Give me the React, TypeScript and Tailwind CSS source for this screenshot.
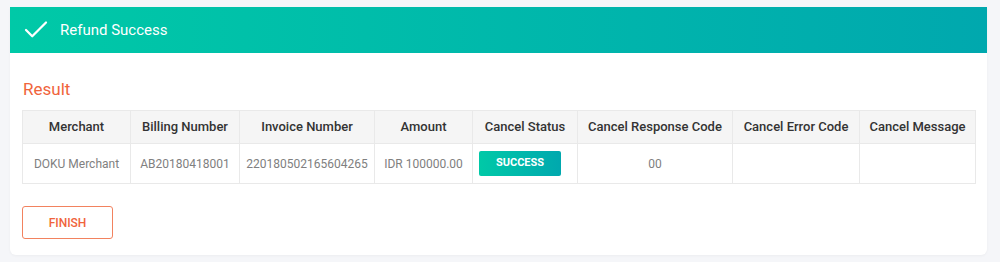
import { Check } from 'lucide-react';

const columns = [
  { label: 'Merchant', width: 'w-[108px]' },
  { label: 'Billing Number', width: 'w-[109px]' },
  { label: 'Invoice Number', width: 'w-[135px]' },
  { label: 'Amount', width: 'w-[98px]' },
  { label: 'Cancel Status', width: 'w-[105px]' },
  { label: 'Cancel Response Code', width: 'w-[155px]' },
  { label: 'Cancel Error Code', width: 'w-[127px]' },
  { label: 'Cancel Message', width: 'w-[116px]' },
];

export default function App() {
  return (
    <div className="min-h-[262px] bg-[#f5f6f9] pt-[7px] pl-[10px] font-['Roboto',sans-serif]">
      <div className="w-[977px] overflow-hidden rounded-b-[6px] bg-white shadow-[0_1px_3px_rgba(0,0,0,0.04)]">
        <div className="flex h-[46px] items-center gap-[9px] bg-linear-to-r from-[#00c9a7] to-[#00a8ae] pl-[11px] text-white">
          <Check className="h-[30px] w-[30px]" strokeWidth={1.8} />
          <span className="text-[15px]">Refund Success</span>
        </div>

        <div className="px-[12px] pt-[24px] pb-[16px]">
          <h2 className="mb-[9px] pl-px text-[17px] leading-[24px] text-[#f0643c]">Result</h2>

          <table className="w-[953px] table-fixed border-collapse text-center">
            <thead>
              <tr className="h-[33px] bg-[#f5f5f5]">
                {columns.map((col) => (
                  <th
                    key={col.label}
                    className={`${col.width} border border-[#e9e9e9] px-1 text-[13px] font-medium text-[#333]`}
                  >
                    {col.label}
                  </th>
                ))}
              </tr>
            </thead>
            <tbody>
              <tr className="h-[40px] text-[12px] text-[#808080]">
                <td className="border border-[#e9e9e9]">DOKU Merchant</td>
                <td className="border border-[#e9e9e9]">AB20180418001</td>
                <td className="border border-[#e9e9e9]">220180502165604265</td>
                <td className="border border-[#e9e9e9]">IDR 100000.00</td>
                <td className="border border-[#e9e9e9] pl-[6px]">
                  <span className="flex h-[25px] w-[82px] items-center justify-center rounded-[2px] bg-linear-to-r from-[#00c9a7] to-[#00a8ae] text-[11px] font-bold text-white">
                    SUCCESS
                  </span>
                </td>
                <td className="border border-[#e9e9e9]">00</td>
                <td className="border border-[#e9e9e9]"></td>
                <td className="border border-[#e9e9e9]"></td>
              </tr>
            </tbody>
          </table>

          <button
            type="button"
            className="mt-[22px] h-[33px] w-[91px] rounded-[3px] border border-[#f2825f] text-[12px] font-medium text-[#f0643c]"
          >
            FINISH
          </button>
        </div>
      </div>
    </div>
  );
}
